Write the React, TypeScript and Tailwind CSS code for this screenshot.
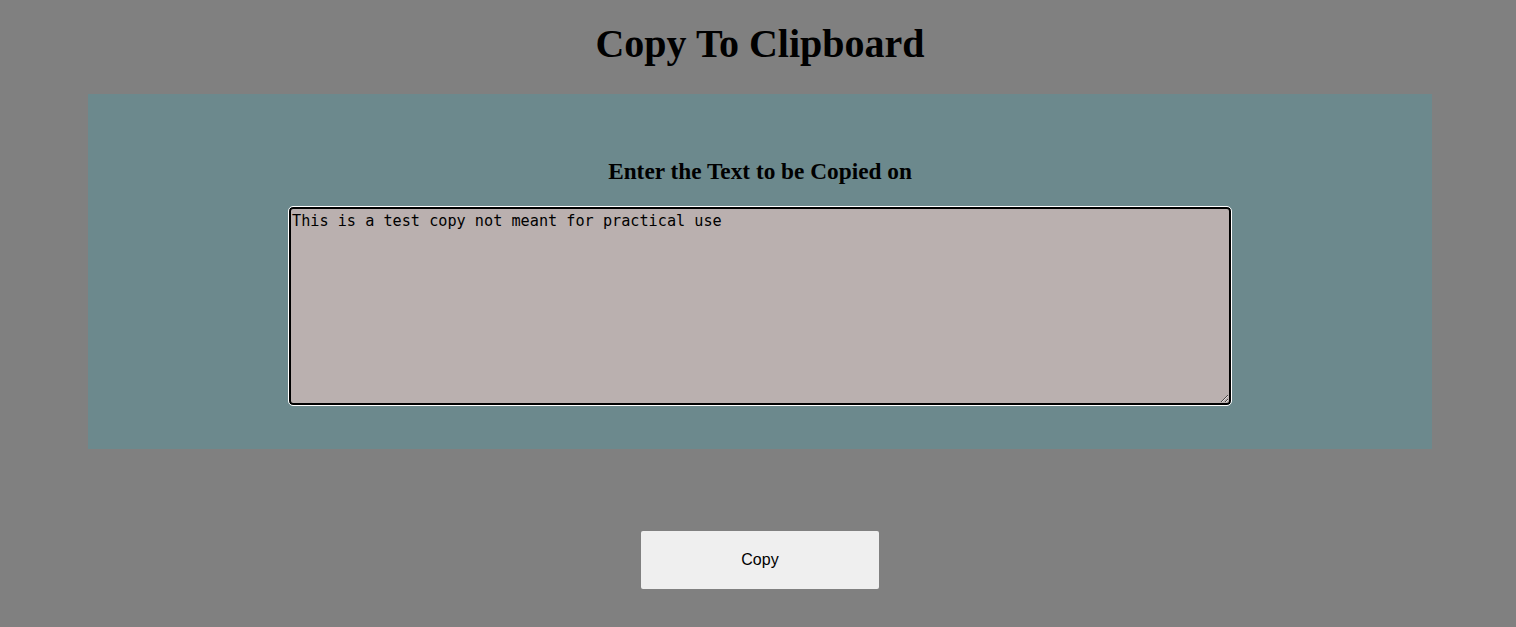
import { useEffect, useRef } from "react";

export default function App() {
  const areaRef = useRef<HTMLTextAreaElement>(null);

  useEffect(() => {
    const el = areaRef.current;
    if (el) {
      el.focus();
      el.setSelectionRange(el.value.length, el.value.length);
    }
  }, []);

  return (
    <div className="min-h-screen bg-[#808080] flex flex-col items-center pt-[21px] pl-[4px]">
      {/* Title */}
      <h1 className="font-['Liberation_Serif',serif] font-bold text-[40px] leading-[46px] text-black">
        Copy To Clipboard
      </h1>

      {/* Input panel */}
      <div className="mt-[27px] w-[1344px] bg-[#6c898d] flex flex-col items-center pt-[64px] pb-[44px]">
        <h3 className="font-['Liberation_Serif',serif] font-bold text-[23.3px] leading-[26px] text-black">
          Enter the Text to be Copied on
        </h3>
        <textarea
          ref={areaRef}
          defaultValue="This is a test copy not meant for practical use"
          className="mt-[23px] w-[942px] h-[198px] bg-[#bab0af] border-2 border-black rounded-[4px] outline outline-1 outline-white px-[1px] py-[3px] font-['DejaVu_Sans_Mono',monospace] text-[15.2px] leading-[18px] text-black"
        />
      </div>

      {/* Action */}
      <button className="mt-[82px] w-[238px] h-[58px] bg-[#efefef] rounded-[2px] font-['Liberation_Sans',Arial,sans-serif] text-[16px] text-black">
        Copy
      </button>
    </div>
  );
}
